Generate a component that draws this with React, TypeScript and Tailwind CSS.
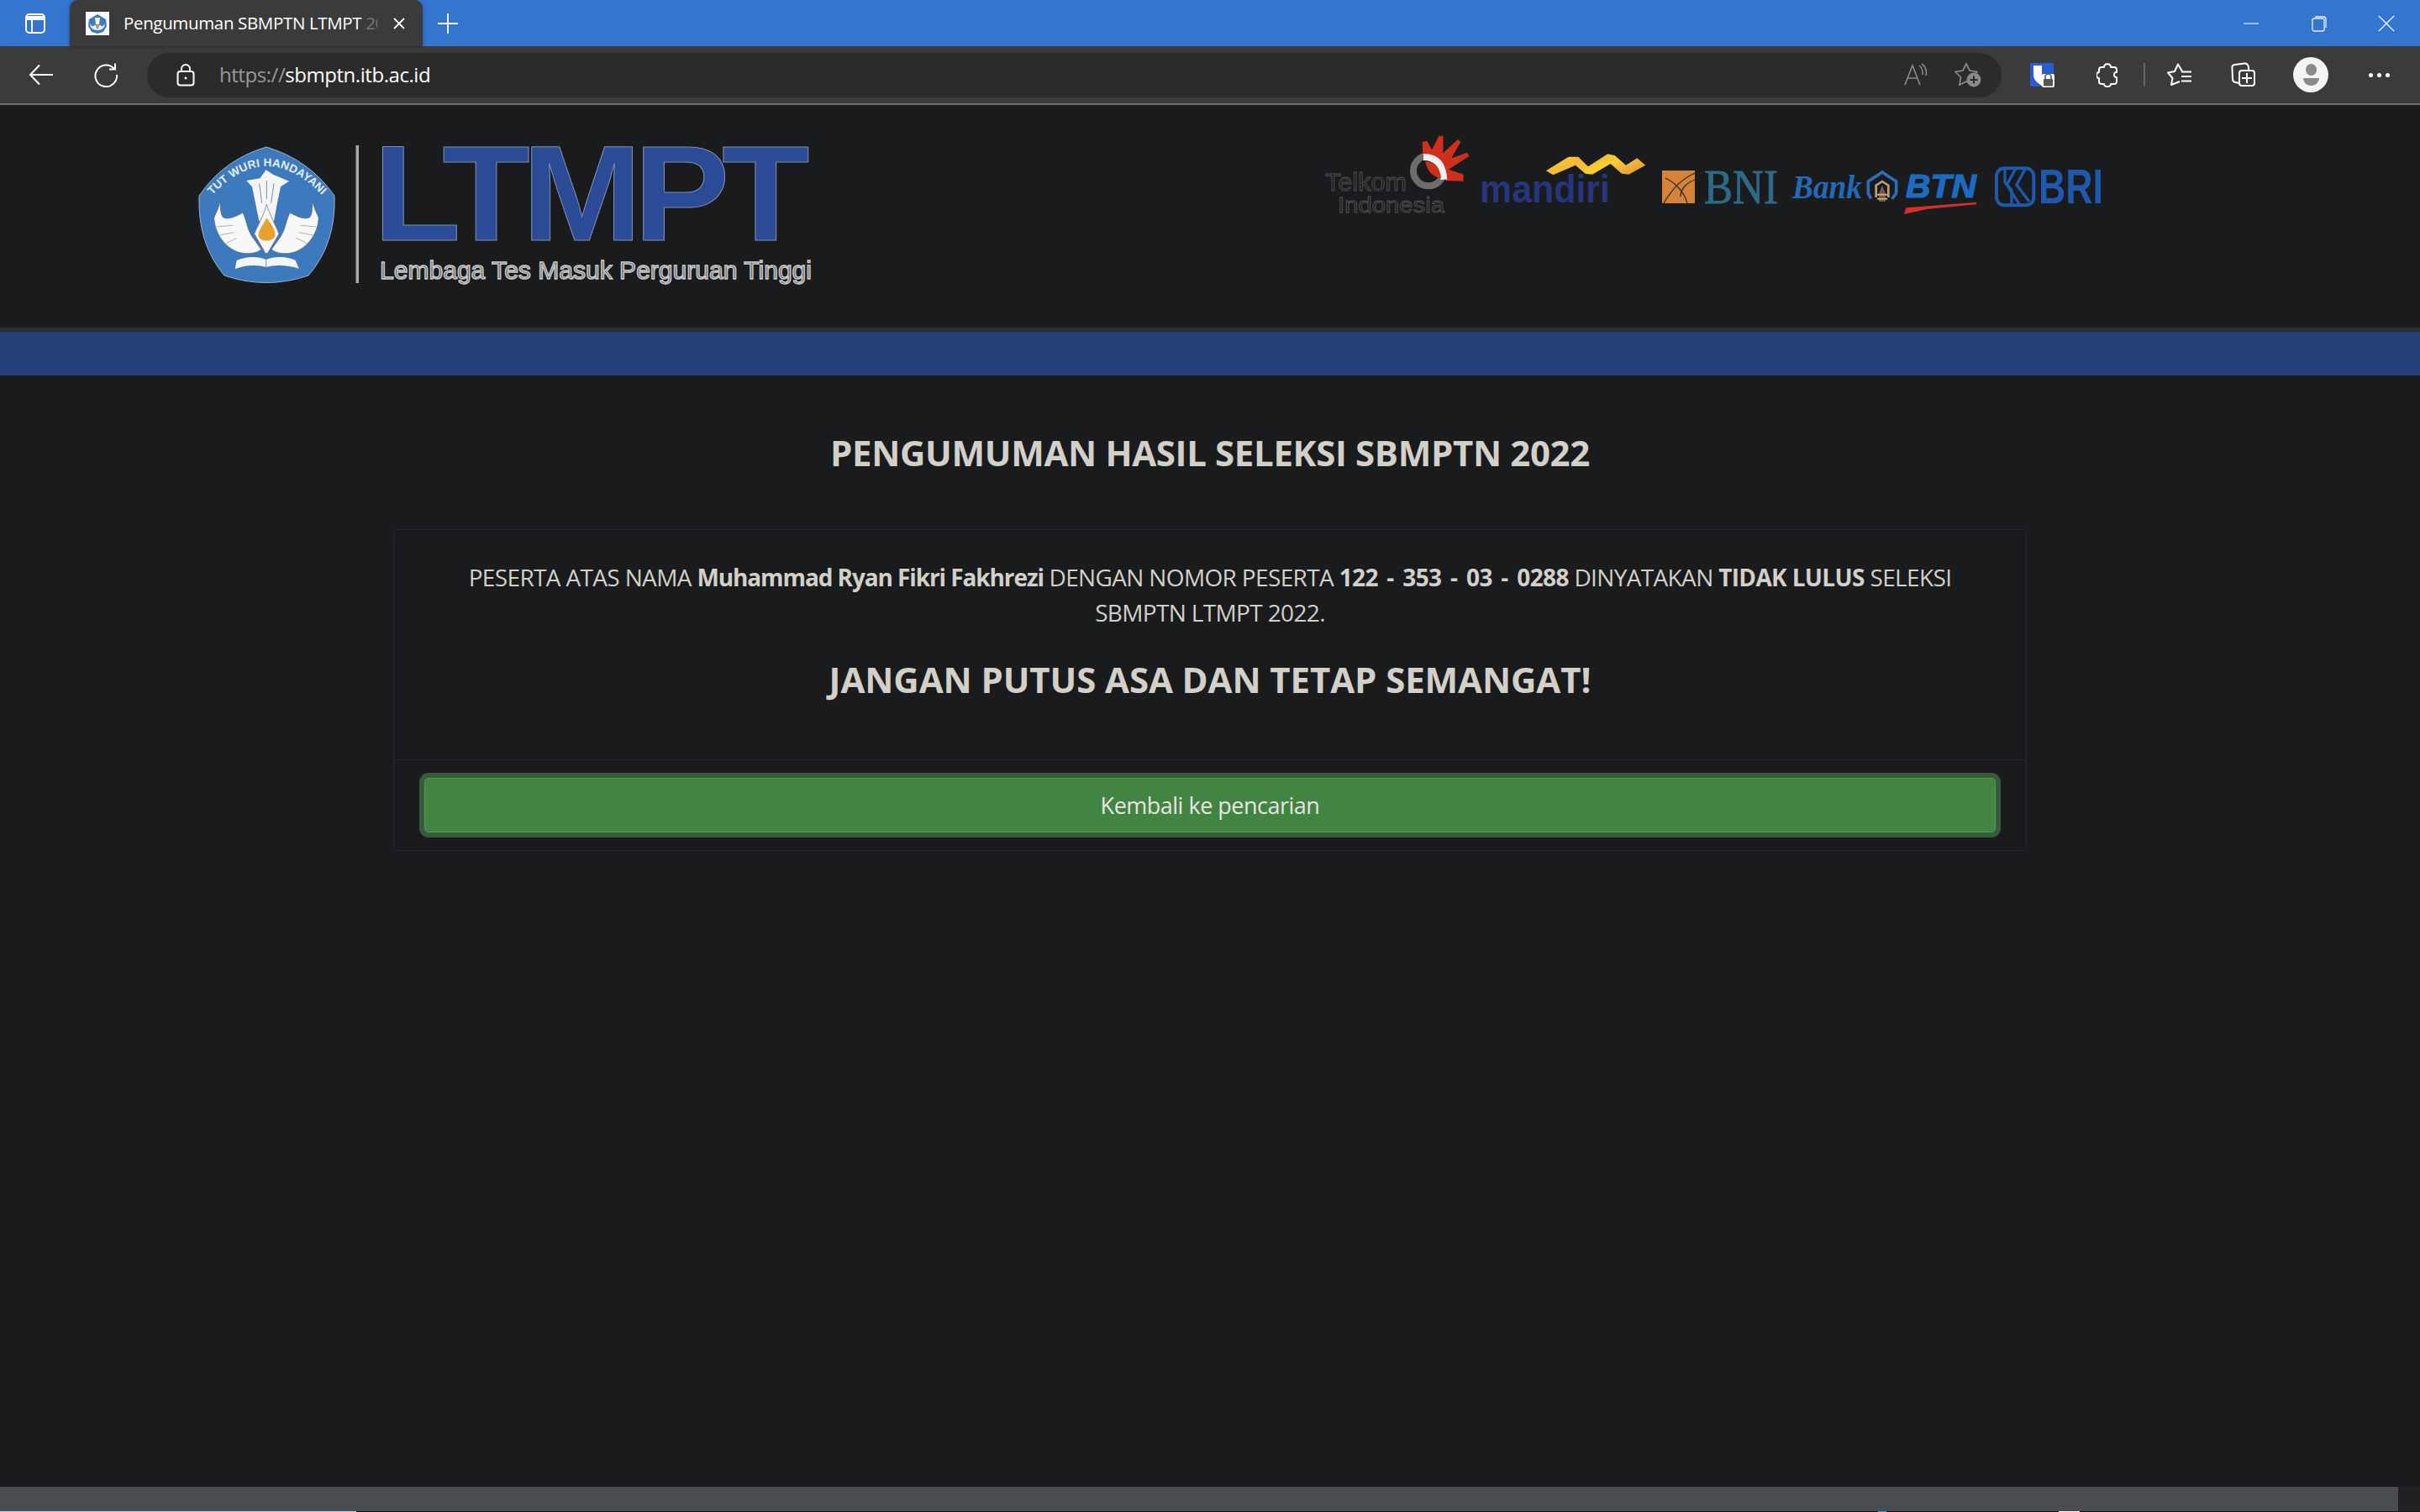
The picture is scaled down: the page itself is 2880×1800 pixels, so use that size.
const UI = "font-['Open_Sans','Noto_Sans',sans-serif]";

function Favicon() {
  return (
    <svg width="28" height="28" viewBox="0 0 28 28" className="shrink-0">
      <rect width="28" height="28" fill="#ffffff" />
      <path d="M14 3 L24 9 L25 17 L21 24 L14 26 L7 24 L3 17 L4 9 Z" fill="#3b7cbf" />
      <path d="M11 7 H17 L16 15 H12 Z" fill="#f2f2f2" />
      <path d="M5 14 C7 18 10 18 11 15 L14 21 L17 15 C18 18 21 18 23 14 C23 19 19 22 14 22 C9 22 5 19 5 14 Z" fill="#f2f2f2" />
      <circle cx="14" cy="17" r="1.8" fill="#e8a030" />
    </svg>
  );
}

function TitleBar() {
  return (
    <div className="flex h-[55px] items-stretch bg-[#3375cf]">
      <div className="flex w-[83px] items-center justify-center">
        <svg width="26" height="26" viewBox="0 0 26 26" fill="none" stroke="#ffffff" strokeWidth="2">
          <rect x="2" y="2" width="22" height="22" rx="4" />
          <path d="M2 6.5 H24" strokeWidth="5" />
          <path d="M9 8 V24" />
        </svg>
      </div>
      <div className="relative flex w-[420px] items-center rounded-t-[10px] bg-[#3b3b3b] pl-[19px] shadow-[0_0_4px_rgba(0,0,0,0.35)]">
        <Favicon />
        <div className={`ml-[17px] w-[302px] shrink-0 overflow-hidden whitespace-nowrap text-[20.5px] tracking-[-0.35px] text-white ${UI}`}>
          Pengumuman SBMPTN LTMPT <span className="text-[#777]">20</span>
        </div>
        <svg width="16" height="16" viewBox="0 0 16 16" stroke="#ffffff" strokeWidth="1.8" className="ml-[18px] shrink-0">
          <path d="M2 2 L14 14 M14 2 L2 14" />
        </svg>
      </div>
      <div className="flex items-center pl-[17px]">
        <svg width="26" height="26" viewBox="0 0 26 26" stroke="#ffffff" strokeWidth="1.8">
          <path d="M13 1 V25 M1 13 H25" />
        </svg>
      </div>
      <div className="ml-auto flex items-center">
        <svg width="20" height="20" viewBox="0 0 20 20" stroke="#e9effa" strokeWidth="1.2" fill="none"><path d="M1 10 H19" /></svg>
        <svg width="20" height="20" viewBox="0 0 20 20" stroke="#e9effa" strokeWidth="1.3" fill="none" className="ml-[61px]">
          <rect x="2" y="4" width="14" height="15" rx="2" />
          <path d="M5 2 H15 Q18 2 18 5 V15" />
        </svg>
        <svg width="20" height="20" viewBox="0 0 20 20" stroke="#f4f7fc" strokeWidth="1.3" className="ml-[60px] mr-[30px]"><path d="M1 1 L19 19 M19 1 L1 19" /></svg>
      </div>
    </div>
  );
}

function ToolBar() {
  return (
    <div className="flex h-[70px] items-center border-b-2 border-[#6e6e6e] bg-[#3b3b3b]">
      <svg width="30" height="26" viewBox="0 0 30 26" fill="none" stroke="#ffffff" strokeWidth="2" className="ml-[34px]">
        <path d="M13 1.5 L2 13 L13 24.5 M2 13 H29" />
      </svg>
      <svg width="30" height="30" viewBox="0 0 30 30" fill="none" stroke="#ffffff" strokeWidth="2" className="ml-[47px]">
        <path d="M25 8 A12.8 12.8 0 1 0 28 15" />
        <path d="M26 1.5 V8.5 H19" />
      </svg>
      <div className="ml-[34px] flex h-[53px] w-[2207px] items-center rounded-full bg-[#2b2b2b] pr-[24px]">
        <svg width="22" height="27" viewBox="0 0 22 27" fill="none" stroke="#ffffff" strokeWidth="2" className="ml-[35px]">
          <rect x="1.5" y="9" width="19" height="16.5" rx="3" />
          <path d="M6 9 V6 A5 5 0 0 1 16 6 V9" />
          <circle cx="11" cy="17" r="1.4" fill="#ffffff" stroke="none" />
        </svg>
        <div className={`ml-[29px] whitespace-nowrap text-[24px] tracking-[-0.45px] text-white ${UI}`}>
          <span className="text-[#999999]">https://</span>sbmptn.itb.ac.id
        </div>
        <svg width="30" height="28" viewBox="0 0 30 28" fill="none" stroke="#8a8a8a" strokeWidth="1.6" className="ml-auto">
          <path d="M2 26 L11 3 L20 26 M5 18 H17" />
          <path d="M19 3 Q24 7 23 14 M22 1 Q29 6 27 15" />
        </svg>
        <svg width="32" height="30" viewBox="0 0 32 30" fill="none" className="ml-[31px]">
          <path d="M14 2 L18 10 L27 11.5 L20.5 18 L22 27 L14 23 L6 27 L7.5 18 L1 11.5 L10 10 Z" stroke="#8a8a8a" strokeWidth="1.7" />
          <circle cx="23" cy="21" r="8.5" fill="#8a8a8a" />
          <path d="M23 16.5 V25.5 M18.5 21 H27.5" stroke="#2b2b2b" strokeWidth="2" />
        </svg>
      </div>
      <svg width="30" height="30" viewBox="0 0 30 30" className="ml-[33px]">
        <rect x="1" y="1" width="28" height="28" rx="2" fill="#2a5bd7" />
        <path d="M5 4 H25 V15 C25 21 20 25 15 28 C10 25 5 21 5 15 Z" fill="#ffffff" />
        <path d="M15 4 H25 V15 C25 21 20 25 15 28 Z" fill="#2a5bd7" />
        <path d="M15 7 H22 V15 C22 18 19 21 15 24 Z" fill="#2a5bd7" />
        <rect x="15" y="14" width="15" height="16" rx="2" fill="#ffffff" />
        <rect x="17" y="20" width="11" height="8.5" rx="1" fill="#555555" />
        <path d="M19 20 V17.5 A3.5 3.5 0 0 1 26 17.5 V20" fill="none" stroke="#555555" strokeWidth="1.6" />
      </svg>
      <svg width="26" height="30" viewBox="0 0 26 30" fill="none" stroke="#ffffff" strokeWidth="2" strokeLinejoin="round" className="ml-[50px]">
        <path d="M9 6 C9 1 17 1 17 6 H21 A3 3 0 0 1 24 9 V12 C20 11 20 19 24 18 V23 A3 3 0 0 1 21 26 H17 C17 30 9 30 9 26 H6 A3 3 0 0 1 3 23 V19 C-1 19 -1 12 3 12 V9 A3 3 0 0 1 6 6 Z" />
      </svg>
      <div className="ml-[30px] h-[28px] w-[2px] bg-[#666666]" />
      <svg width="30" height="28" viewBox="0 0 30 28" fill="none" stroke="#ffffff" strokeWidth="2" strokeLinejoin="round" className="ml-[26px]">
        <path d="M18 10 L13 1.5 L9 10 L1 11.5 L6.5 18 L5 26 L15 22" />
        <path d="M17 10.5 H29 M17 16 H29 M17 21.5 H29" />
      </svg>
      <svg width="30" height="30" viewBox="0 0 30 30" fill="none" stroke="#ffffff" strokeWidth="2" className="ml-[46px]">
        <path d="M9 25 L6 24 Q2 24 2 20 L1.5 7 Q1 3 5 3 L16 1.5 Q20 1 21 6 V9" />
        <rect x="10" y="10" width="18" height="18" rx="3" />
        <path d="M19 13 V25 M13 19 H25" />
      </svg>
      <div className="ml-[44px] flex h-[42px] w-[42px] flex-col items-center justify-center rounded-full bg-[#f4f4f4]">
        <div className="h-[14px] w-[13px] rounded-full bg-[#8a8a8a]" />
        <div className="mt-[3px] h-[9px] w-[19px] rounded-b-full bg-[#8a8a8a]" />
      </div>
      <div className="ml-[48px] flex gap-[5px]">
        <div className="h-[5px] w-[5px] rounded-full bg-white" />
        <div className="h-[5px] w-[5px] rounded-full bg-white" />
        <div className="h-[5px] w-[5px] rounded-full bg-white" />
      </div>
    </div>
  );
}

function LtmptLogo() {
  return (
    <svg width="780" height="190" viewBox="210 165 780 190" className="shrink-0">
      <path d="M317 175 Q368 190 398 233 Q400 290 367 328 Q317 345 267 328 Q235 290 237 233 Q266 190 317 175 Z" fill="#3d7abd" stroke="#9cb4ce" strokeWidth="1" />
      <path id="arc" d="M253 232 Q317 164 383 232" fill="none" />
      <text fontFamily="'Liberation Sans',sans-serif" fontWeight="700" fontSize="13.5" fill="#e5ecf4" letterSpacing="0.2">
        <textPath href="#arc" startOffset="50%" textAnchor="middle">TUT WURI HANDAYANI</textPath>
      </text>
      <g transform="translate(210 165) scale(0.3333)">
        <path d="M250 150 L298 142 L320 112 L345 128 L402 152 L372 172 L358 240 L348 295 L295 295 L284 240 L270 172 Z" fill="#f5f5f5" />
        <path d="M296 160 L305 230 M322 150 V215 M348 160 L338 230" stroke="#7a8da0" strokeWidth="3" fill="none" />
        <path d="M155 225 C150 260 130 280 135 290 C138 330 165 385 220 405 C250 415 290 410 302 395 L270 350 C250 320 250 285 236 265 C210 280 180 292 165 280 C155 265 158 240 155 225 Z" fill="#f8f8f8" stroke="#5a6570" strokeWidth="2" />
        <path d="M487 225 C492 260 512 280 507 290 C504 330 477 385 422 405 C392 415 352 410 340 395 L372 350 C392 320 392 285 406 265 C432 280 462 292 477 280 C487 265 484 240 487 225 Z" fill="#f8f8f8" stroke="#5a6570" strokeWidth="2" />
        <path d="M145 315 L200 310 M155 345 L205 335 M175 375 L215 355 M497 315 L442 310 M487 345 L437 335 M467 375 L427 355" stroke="#9aa4ad" strokeWidth="2.5" />
        <path d="M278 340 C295 300 305 290 322 235 C340 290 350 300 366 340 L325 410 L318 410 Z" fill="#f8f8f8" stroke="#5a6570" strokeWidth="2" />
        <path d="M322 283 C340 308 356 330 352 348 C346 370 298 370 293 348 C290 330 310 308 322 283 Z" fill="#e8a030" />
        <path d="M215 435 C250 420 290 420 320 432 C350 420 395 420 425 435 L437 464 C395 450 350 450 320 459 C290 450 245 450 209 466 Z" fill="#f5f5f5" />
        <path d="M320 432 V459" stroke="#5a6570" strokeWidth="2" />
      </g>
      <rect x="423.5" y="173" width="3.5" height="164" fill="#a9a9a9" />
      <text x="444" y="286" fontFamily="'Liberation Sans',sans-serif" fontWeight="700" fontSize="161" fill="#2b4b96" stroke="#7e8db0" strokeWidth="1" letterSpacing="-9" textLength="510" lengthAdjust="spacingAndGlyphs">LTMPT</text>
      <text x="452" y="332" fontFamily="'Liberation Sans',sans-serif" fontWeight="400" fontSize="29" fill="#5e6163" stroke="#c8c8c8" strokeWidth="1.4" textLength="514" lengthAdjust="spacingAndGlyphs">Lembaga Tes Masuk Perguruan Tinggi</text>
    </svg>
  );
}

function SponsorLogos() {
  return (
    <svg width="960" height="120" viewBox="1560 150 960 120" className="shrink-0">
      <defs>
        <linearGradient id="mw" x1="0" x2="1" y1="0" y2="0.5">
          <stop offset="0" stopColor="#f9d52e" />
          <stop offset="0.45" stopColor="#f3b83a" />
          <stop offset="0.7" stopColor="#f7d02e" />
          <stop offset="1" stopColor="#e9a33e" />
        </linearGradient>
      </defs>
      <g transform="translate(1570 155) scale(0.3333)">
        <circle cx="390" cy="145" r="54" fill="none" stroke="#6c6c6c" strokeWidth="24" />
        <path d="M370 92 L368 42 L385 38 L402 70 L428 20 L443 22 L442 82 L495 33 L505 42 L472 100 L528 80 L536 92 L462 140 L515 158 L515 182 L452 180 L430 130 Z" fill="#cf2f1d" />
        <path d="M372 96 Q440 95 445 176" fill="none" stroke="#f1f1f1" strokeWidth="24" />
        <path d="M378 112 Q430 112 435 172 Q390 165 378 112 Z" fill="#cf2f1d" />
      </g>
      <text x="1577" y="227" fontFamily="'Liberation Sans',sans-serif" fontSize="30" fill="#1c1d1e" stroke="#505050" strokeWidth="0.9" textLength="97" lengthAdjust="spacingAndGlyphs">Telkom</text>
      <text x="1592" y="253" fontFamily="'Liberation Sans',sans-serif" fontSize="26" fill="#1c1d1e" stroke="#505050" strokeWidth="0.9" textLength="127" lengthAdjust="spacingAndGlyphs">Indonesia</text>

      <g transform="translate(1570 155) scale(0.3333)">
        <path d="M810 145 L890 95 L925 95 L960 130 L1030 85 L1055 90 L1095 125 L1135 100 L1165 125 L1105 158 L1080 155 L1040 120 L975 158 L950 155 L915 125 L835 160 Z" fill="url(#mw)" />
      </g>
      <text x="1761" y="241" fontFamily="'Liberation Sans',sans-serif" fontWeight="700" fontSize="47" fill="#27357a" textLength="155" lengthAdjust="spacingAndGlyphs">mandiri</text>

      <rect x="1978" y="203" width="39" height="39" fill="#d68238" />
      <path d="M2017 206 C2000 214 1990 225 1980 242 M1982 212 C1995 218 2005 230 2008 242 M2017 214 C2006 218 2000 226 2000 234" fill="none" stroke="#2a2a2a" strokeWidth="1.2" />
      <text x="2028" y="242" fontFamily="'Liberation Serif',serif" fontSize="57" fill="#2e6a85" stroke="#2e6a85" strokeWidth="0.8" textLength="88" lengthAdjust="spacingAndGlyphs">BNI</text>

      <text x="2133" y="236" fontFamily="'Liberation Serif',serif" fontStyle="italic" fontWeight="700" fontSize="40" fill="#2569b6" textLength="83" lengthAdjust="spacingAndGlyphs">Bank</text>
      <g transform="translate(2210 190) scale(0.3333)">
        <path d="M50 140 L40 120 V78 L90 45 L140 78 V120 L125 140" fill="none" stroke="#2d6cb8" strokeWidth="11" />
        <path d="M68 135 V92 L90 78 L112 92 V135" fill="none" stroke="#b9a07a" strokeWidth="8" />
        <path d="M78 120 L90 92 L102 120 V150 H78 Z" fill="#6e5a44" />
        <path d="M72 125 H108 M72 140 H108" stroke="#c7a877" strokeWidth="6" />
      </g>
      <text x="2268" y="235" fontFamily="'Liberation Sans',sans-serif" fontStyle="italic" fontWeight="700" fontSize="38" fill="#1d6bc0" stroke="#1d6bc0" strokeWidth="1.2" textLength="84" lengthAdjust="spacingAndGlyphs">BTN</text>
      <g transform="translate(2210 190) scale(0.3333)">
        <path d="M168 195 L175 172 L300 162 L428 152 L425 160 L250 177 Z" fill="#d62e2a" />
      </g>

      <g transform="translate(2210 190) scale(0.3333)" fill="none" stroke="#2058ad">
        <rect x="498" y="31" width="133" height="132" rx="28" strokeWidth="12" />
        <path d="M528 35 V80 L552 110 V160 M565 35 L535 90 L580 160 M600 35 L570 90 L615 150" strokeWidth="10" />
      </g>
      <text x="2426" y="242" fontFamily="'Liberation Sans',sans-serif" fontWeight="700" fontSize="57" fill="#2058ad" textLength="77" lengthAdjust="spacingAndGlyphs">BRI</text>
    </svg>
  );
}

export default function App() {
  return (
    <div className="flex h-[1800px] w-[2880px] flex-col overflow-hidden bg-[#191b1d]">
      <TitleBar />
      <ToolBar />
      <header className="flex h-[265px] items-start pl-[210px]">
        <div className="pt-[40px]"><LtmptLogo /></div>
        <div className="ml-auto pr-[360px] pt-[25px]"><SponsorLogos /></div>
      </header>
      <div className="h-[5px] bg-[#2c3033]" />
      <div className="h-[52px] bg-[#264078]" />
      <main className={`flex flex-1 flex-col items-center ${UI} text-[#d3cfc9]`}>
        <h4 className="mt-[67px] text-[42px] font-bold leading-[50px] tracking-[-0.35px] whitespace-nowrap">PENGUMUMAN HASIL SELEKSI SBMPTN 2022</h4>
        <section className="mt-[66px] flex w-[1944px] flex-col rounded-[6px] border border-[#26292b]">
          <div className="flex h-[273px] flex-col items-center px-[35px] pt-[35px] text-center">
            <p className="text-[28px] leading-[42px] tracking-[-0.65px]">
              PESERTA ATAS NAMA <b className="font-bold tracking-[-1.1px]">Muhammad Ryan Fikri Fakhrezi</b> DENGAN NOMOR PESERTA <b className="font-bold [word-spacing:4px]">122 - 353 - 03 - 0288</b> DINYATAKAN <b className="font-bold">TIDAK LULUS</b> SELEKSI
              <br />
              SBMPTN LTMPT 2022.
            </p>
            <h4 className="mt-[34px] text-[42px] font-bold leading-[50px] tracking-[-0.1px] whitespace-nowrap">JANGAN PUTUS ASA DAN TETAP SEMANGAT!</h4>
          </div>
          <div className="border-t border-[#26292b] px-[36px] py-[21px]">
            <button className="flex h-[65px] w-full items-center justify-center rounded-[5px] border border-[#4f9c4f] bg-[#428442] pt-[2px] text-[27px] tracking-[-0.5px] text-[#e8e6e3] shadow-[0_0_0_6px_#3a5a3e]">
              Kembali ke pencarian
            </button>
          </div>
        </section>
      </main>
      <div className="flex h-[29px] shrink-0">
        <div className="flex-1 bg-[#494d50]" />
        <div className="w-[26px] bg-[#1f2122]" />
      </div>
      <div className="flex h-px shrink-0 bg-[#101214]">
        <div className="w-[424px] bg-[#a9d3f0]" />
        <div className="ml-[1811px] w-[10px] bg-[#2f9be0]" />
        <div className="ml-[205px] w-[25px] bg-[#f0f0f0]" />
      </div>
    </div>
  );
}
